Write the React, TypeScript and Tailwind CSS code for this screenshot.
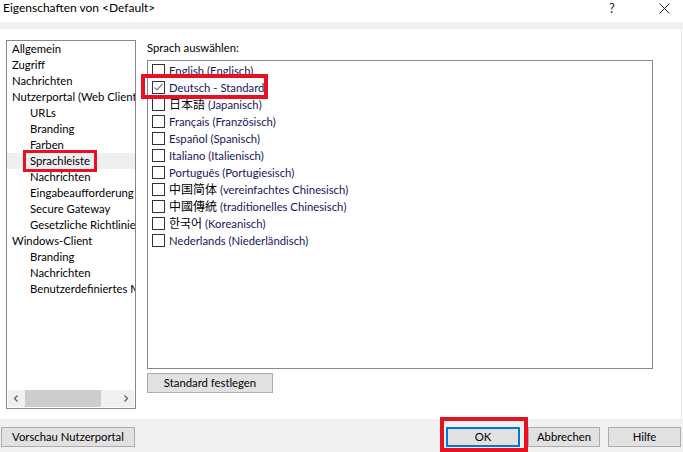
import React from "react";

const font = { fontFamily: 'Lato, "Noto Sans", "Noto Sans CJK JP", sans-serif' };

const tree: { label: string; indent: boolean; selected?: boolean }[] = [
  { label: "Allgemein", indent: false },
  { label: "Zugriff", indent: false },
  { label: "Nachrichten", indent: false },
  { label: "Nutzerportal (Web Client)", indent: false },
  { label: "URLs", indent: true },
  { label: "Branding", indent: true },
  { label: "Farben", indent: true },
  { label: "Sprachleiste", indent: true, selected: true },
  { label: "Nachrichten", indent: true },
  { label: "Eingabeaufforderung", indent: true },
  { label: "Secure Gateway", indent: true },
  { label: "Gesetzliche Richtlinien", indent: true },
  { label: "Windows-Client", indent: false },
  { label: "Branding", indent: true },
  { label: "Nachrichten", indent: true },
  { label: "Benutzerdefiniertes Menü", indent: true },
];

const langs: { native: string; de: string; checked?: boolean; cjk?: string }[] = [
  { native: "English", de: "(Englisch)" },
  { native: "Deutsch - Standard", de: "", checked: true },
  { native: "日本語", de: "(Japanisch)", cjk: '"Noto Sans CJK JP"' },
  { native: "Français", de: "(Französisch)" },
  { native: "Español", de: "(Spanisch)" },
  { native: "Italiano", de: "(Italienisch)" },
  { native: "Português", de: "(Portugiesisch)" },
  { native: "中国简体", de: "(vereinfachtes Chinesisch)", cjk: '"Noto Sans CJK SC"' },
  { native: "中國傳統", de: "(traditionelles Chinesisch)", cjk: '"Noto Sans CJK TC"' },
  { native: "한국어", de: "(Koreanisch)", cjk: '"Noto Sans CJK KR"' },
  { native: "Nederlands", de: "(Niederländisch)" },
];

function Btn({ label, w, primary }: { label: string; w: string; primary?: boolean }) {
  return (
    <div
      className={`${w} h-[20px] flex items-center justify-center bg-[#e1e1e1] text-[11.3px] text-black leading-none ${
        primary ? "border-2 border-[#0078d7]" : "border border-[#adadad]"
      }`}
    >
      {label}
    </div>
  );
}

export default function App() {
  return (
    <div className="w-[683px] h-[452px] bg-white relative overflow-hidden text-[11.3px] text-black" style={font}>
      {/* Title bar */}
      <div className="h-[22px] flex items-start pt-[2px]">
        <div className="pl-[3px] flex-1 leading-none text-[12px]">Eigenschaften von &lt;Default&gt;</div>
        <div className="w-[14px] text-[13px] leading-none text-[#222]">?</div>
        <div className="w-[36px]" />
        <svg width="11" height="11" viewBox="0 0 11 11" className="mr-[13px] mt-[1px]">
          <path d="M0.5 0.5 L10.5 10.5 M10.5 0.5 L0.5 10.5" stroke="#222" strokeWidth="1" fill="none" />
        </svg>
      </div>
      <div className="h-[7px] bg-[#f0f0f0]" />

      {/* Main white area */}
      <div className="h-[390px] w-[682px] border-r border-[#e3e3e3] flex">
        {/* Tree panel */}
        <div className="ml-[6px] mt-[11px] w-[130px] h-[369px] border border-[#828790] flex flex-col overflow-hidden">
          <div className="flex-1">
            {tree.map((t, i) => (
              <div
                key={i}
                className={`h-[16px] flex items-center whitespace-nowrap overflow-hidden leading-none ${
                  t.indent ? "pl-[23px]" : "pl-[5px]"
                } ${t.selected ? "bg-[#efefef]" : ""}`}
              >
                {t.label}
              </div>
            ))}
          </div>
          <div className="h-[17px] mb-[1px] flex items-center bg-[#f0f0f0] mx-[1px]">
            <svg width="17" height="17" viewBox="0 0 17 17">
              <path d="M9.5 5.5 L6.5 8.5 L9.5 11.5" stroke="#606060" strokeWidth="1.3" fill="none" />
            </svg>
            <div className="w-[76px] h-[17px] bg-[#cdcdcd]" />
            <div className="flex-1" />
            <svg width="17" height="17" viewBox="0 0 17 17">
              <path d="M7.5 5.5 L10.5 8.5 L7.5 11.5" stroke="#606060" strokeWidth="1.3" fill="none" />
            </svg>
          </div>
        </div>

        {/* Right panel */}
        <div className="ml-[10px] flex flex-col">
          <div className="h-[16px] mt-[11px] flex items-center leading-none pl-[1px]">Sprach auswählen:</div>
          <div className="mt-[4px] ml-[1px] w-[506px] h-[309px] border border-[#828790] pt-[1px]">
            {langs.map((l, i) => (
              <div key={i} className="h-[17px] flex items-center pl-[4px] whitespace-nowrap leading-none text-[#16165a]">
                <div className="w-[13px] h-[13px] border border-[#333] bg-white flex items-center justify-center shrink-0">
                  {l.checked && (
                    <svg width="11" height="11" viewBox="0 0 11 11">
                      <path d="M1.5 5.5 L4 8 L9.5 2" stroke="#7a7a7a" strokeWidth="1.2" fill="none" />
                    </svg>
                  )}
                </div>
                <span className="ml-[4px] leading-none">
                  <span
                    className={l.cjk ? "text-black text-[12px] leading-none" : ""}
                    style={l.cjk ? { fontFamily: `${l.cjk}, "Noto Sans", sans-serif` } : undefined}
                  >
                    {l.native}
                  </span>
                  {l.de && <span> {l.de}</span>}
                </span>
              </div>
            ))}
          </div>
          <div className="mt-[4px] ml-[1px]">
            <Btn label="Standard festlegen" w="w-[126px]" />
          </div>
        </div>
      </div>

      {/* Bottom bar */}
      <div className="h-[33px] bg-[#f0f0f0] flex items-start pt-[8px]">
        <div className="ml-[1px]">
          <Btn label="Vorschau Nutzerportal" w="w-[134px]" />
        </div>
        <div className="flex-1" />
        <Btn label="OK" w="w-[74px]" primary />
        <div className="w-[8px]" />
        <Btn label="Abbrechen" w="w-[72px]" />
        <div className="w-[8px]" />
        <Btn label="Hilfe" w="w-[73px]" />
        <div className="w-[2px]" />
      </div>

      {/* Red highlight overlays */}
      <div className="absolute left-[23px] top-[150px] w-[74px] h-[22px] border-[3px] border-[#e81123]" />
      <div className="absolute left-[141px] top-[74px] w-[127px] h-[25px] border-[4px] border-[#e81123]" />
      <div className="absolute left-[440px] top-[417px] w-[88px] h-[35px] border-[4px] border-[#e81123]" />
    </div>
  );
}
